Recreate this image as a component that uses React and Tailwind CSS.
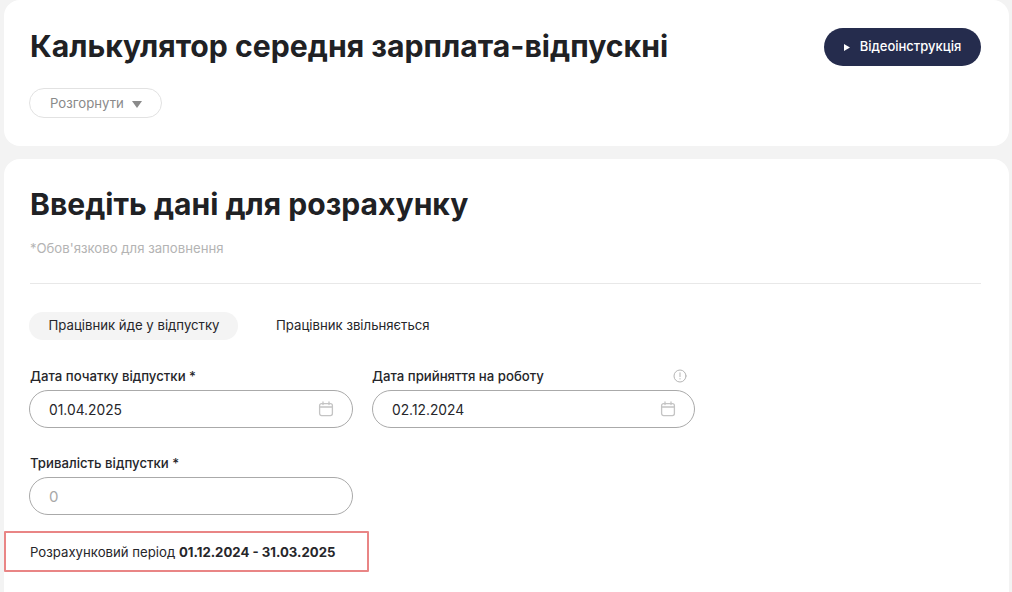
// App.jsx
// Average salary to vacation pay calculator: header card and input form card.
import React from "react";

const CalendarIcon = () => (
  <svg width="16" height="16" viewBox="0 0 16 16" fill="none" stroke="#c4c4c4" strokeWidth="1.3" strokeLinecap="round">
    <rect x="1.6" y="2.6" width="12.8" height="12" rx="2" />
    <path d="M1.6 6h12.8M5 1v2.6M11 1v2.6" />
  </svg>
);

const DateField = ({ label, value, hint, className, labelClass }) => (
  <div className={className}>
    <div className="flex h-[20px] items-center justify-between pr-[8px]">
      <span className={`text-[13.2px] font-medium text-[#26262a] ${labelClass || ""}`}>{label}</span>
      {hint && (
        <svg className="-mt-[2px]" width="14" height="14" viewBox="0 0 14 14" fill="none" stroke="#b5b5b5" strokeWidth="1" strokeLinecap="round">
          <circle cx="7" cy="7" r="6" />
          <path d="M7 3.8v3.8M7 9.6v.4" />
        </svg>
      )}
    </div>
    <div className="mt-[3px] flex h-[38px] items-center justify-between rounded-full border border-[#aaaaaa] bg-white pl-[19px] pr-[18px] text-[13.8px] text-[#26262a]">
      <span className="pt-[2px]">{value}</span>
      <CalendarIcon />
    </div>
  </div>
);

export default function App() {
  return (
    <div className="h-[592px] overflow-hidden bg-[#f3f3f3] pl-[4px] pr-[3px] font-['Inter',sans-serif]">
      <section className="flex h-[146px] items-start justify-between rounded-b-[16px] rounded-t-[16px] bg-white pl-[25px] pr-[28px] pt-[28px]">
        <div>
          <h1 className="-mt-px pl-px text-[30.2px] font-bold leading-[38px] text-[#202124]">
            Калькулятор середня зарплата-відпускні
          </h1>
          <button className="mt-[23px] flex h-[30px] w-[133px] items-center gap-[8px] rounded-full border border-[#e2e2e2] bg-white pl-[20px] pt-[2px] text-[13.2px] text-[#8a8a8a]">
            Розгорнути
            <svg width="10" height="7" viewBox="0 0 10 7" fill="#8a8a8a">
              <path d="M0 0h10L5 7z" />
            </svg>
          </button>
        </div>
        <button className="flex h-[38px] w-[157px] items-center justify-center gap-[10px] rounded-full bg-[#252c4d] text-[13px] font-medium text-white">
          <svg width="6" height="7" viewBox="0 0 6 7" fill="#ffffff">
            <path d="M0 0l6 3.5L0 7z" />
          </svg>
          Відеоінструкція
        </button>
      </section>

      <section className="mt-[13px] h-[440px] rounded-t-[16px] bg-white pl-[25px] pr-[28px] pt-[26px]">
        <h2 className="pl-px text-[30.1px] font-bold leading-[38px] text-[#202124]">
          Введіть дані для розрахунку
        </h2>
        <p className="mt-[15px] pl-px text-[13.2px] leading-[20px] text-[#b4b4b4]">
          *Обов'язково для заповнення
        </p>
        <div className="ml-px mt-[25px] h-px bg-[#e8e8e8]" />

        <div className="mt-[28px] flex items-center gap-[38px] text-[13.2px] text-[#26262a]">
          <span className="flex h-[28px] w-[209px] items-center justify-center rounded-full bg-[#f4f4f4] pl-px">
            Працівник йде у відпустку
          </span>
          <span>Працівник звільняється</span>
        </div>

        <div className="mt-[27px] flex gap-[19px]">
          <DateField className="w-[324px]" labelClass="pl-px" label="Дата початку відпустки *" value="01.04.2025" />
          <DateField className="w-[323px]" label="Дата прийняття на роботу" value="02.12.2024" hint />
        </div>

        <div className="mt-[26px] w-[324px]">
          <div className="flex h-[20px] items-center pl-px text-[13.2px] font-medium text-[#26262a]">
            Тривалість відпустки *
          </div>
          <div className="mt-[3px] flex h-[38px] items-center rounded-full border border-[#aaaaaa] bg-white pl-[19px] pt-[3px] text-[15px] text-[#a8a8a8]">
            0
          </div>
        </div>

        <div className="ml-[-25px] mt-[16px] flex h-[41px] w-[365px] items-center rounded-[1px] border-2 border-[#e98585] pl-[24px] pt-[2px] text-[13.2px] text-[#26262a]">
          <span>
            Розрахунковий період <b className="font-bold">01.12.2024 - 31.03.2025</b>
          </span>
        </div>
      </section>
    </div>
  );
}
